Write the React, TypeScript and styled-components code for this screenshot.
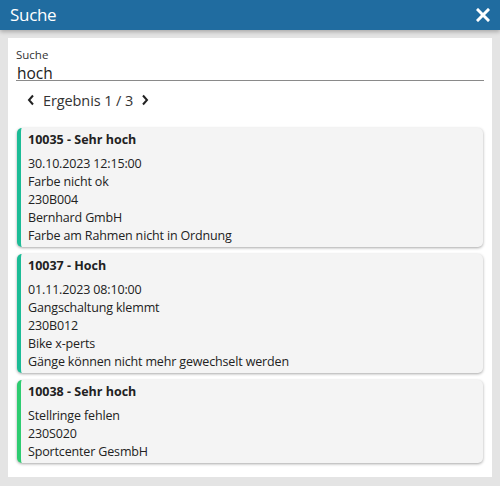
import { createGlobalStyle } from "styled-components";
import styled from "styled-components";

const GlobalStyle = createGlobalStyle`
    html, body {
        margin: 0;
        padding: 0;
        background: #e4e4e4;
        font-family: "Open Sans", "Noto Sans", sans-serif;
        color: #222;
    }
    * { box-sizing: border-box; }
`;

interface IResult {
    id: string;
    priority: string;
    lines: string[];
    color: string;
}

const results: IResult[] = [
    {
        id: "10035",
        priority: "Sehr hoch",
        lines: ["30.10.2023 12:15:00", "Farbe nicht ok", "230B004", "Bernhard GmbH", "Farbe am Rahmen nicht in Ordnung"],
        color: "#1cbc96",
    },
    {
        id: "10037",
        priority: "Hoch",
        lines: ["01.11.2023 08:10:00", "Gangschaltung klemmt", "230B012", "Bike x-perts", "Gänge können nicht mehr gewechselt werden"],
        color: "#1cbc96",
    },
    {
        id: "10038",
        priority: "Sehr hoch",
        lines: ["Stellringe fehlen", "230S020", "Sportcenter GesmbH"],
        color: "#2ecc71",
    },
];

const S = {
    Page: styled.div`
        width: 500px;
        height: 486px;
        display: flex;
        flex-direction: column;
        background: #e4e4e4;
        overflow: hidden;
    `,
    Header: styled.div`
        height: 30px;
        flex-shrink: 0;
        background: #206ca0;
        color: #fff;
        display: flex;
        align-items: center;
        justify-content: space-between;
        padding: 0 10px;
        box-shadow: 0 2px 4px rgba(0, 0, 0, 0.25);
        position: relative;
        z-index: 1;
    `,
    Title: styled.div`
        font-size: 17px;
        line-height: 30px;
        letter-spacing: -0.3px;
    `,
    Close: styled.div`
        width: 14px;
        height: 14px;
        display: flex;
        cursor: pointer;
    `,
    Body: styled.div`
        flex: 1;
        padding: 8px 8px 9px 8px;
        display: flex;
    `,
    Panel: styled.div`
        flex: 1;
        background: #fff;
        padding: 10px 8px 14px 8px;
        display: flex;
        flex-direction: column;
    `,
    Label: styled.div`
        font-size: 11.5px;
        line-height: 14px;
        margin-bottom: 5px;
        color: #333;
    `,
    Input: styled.div`
        font-size: 15.5px;
        line-height: 13px;
        height: 14px;
        padding-left: 1px;
        border-bottom: 1px solid #8a8a8a;
        color: #222;
    `,
    Nav: styled.div`
        display: flex;
        align-items: center;
        gap: 8px;
        height: 24px;
        margin: 7px 0 16px 11px;
        font-size: 14.5px;
        letter-spacing: -0.1px;
        color: #333;
    `,
    NavBtn: styled.div`
        display: flex;
        align-items: center;
        cursor: pointer;
    `,
    List: styled.div`
        display: flex;
        flex-direction: column;
        gap: 7px;
        padding: 0 1px;
    `,
    Card: styled.div<{ $color: string }>`
        background: #f4f4f4;
        border-left: 4px solid ${({ $color }) => $color};
        border-radius: 5px;
        padding: 3px 10px 2px 7px;
        box-shadow: 0 1px 3px rgba(0, 0, 0, 0.35);
    `,
    CardTitle: styled.div`
        font-size: 12.5px;
        font-weight: 700;
        line-height: 18px;
        margin-bottom: 6px;
        color: #222;
    `,
    Line: styled.div`
        font-size: 12.5px;
        line-height: 18px;
        letter-spacing: -0.15px;
        color: #222;
    `,
};

const Chevron = ({ dir }: { dir: "left" | "right" }) => (
    <svg width="8" height="12" viewBox="0 0 8 12">
        <path
            d={dir === "left" ? "M6 1.5 L2 6 L6 10.5" : "M2 1.5 L6 6 L2 10.5"}
            fill="none"
            stroke="#222"
            strokeWidth="2"
        />
    </svg>
);

const App = () => {
    return (
        <S.Page>
            <GlobalStyle />
            <S.Header>
                <S.Title>Suche</S.Title>
                <S.Close>
                    <svg width="14" height="14" viewBox="0 0 14 14">
                        <path d="M2 2 L12 12 M12 2 L2 12" stroke="#fff" strokeWidth="3" strokeLinecap="square" />
                    </svg>
                </S.Close>
            </S.Header>
            <S.Body>
                <S.Panel>
                    <S.Label>Suche</S.Label>
                    <S.Input>hoch</S.Input>
                    <S.Nav>
                        <S.NavBtn><Chevron dir="left" /></S.NavBtn>
                        <span>Ergebnis 1 / 3</span>
                        <S.NavBtn><Chevron dir="right" /></S.NavBtn>
                    </S.Nav>
                    <S.List>
                        {results.map((r) => (
                            <S.Card key={r.id} $color={r.color}>
                                <S.CardTitle>{r.id} - {r.priority}</S.CardTitle>
                                {r.lines.map((l, i) => (
                                    <S.Line key={i}>{l}</S.Line>
                                ))}
                            </S.Card>
                        ))}
                    </S.List>
                </S.Panel>
            </S.Body>
        </S.Page>
    );
};

export default App;
